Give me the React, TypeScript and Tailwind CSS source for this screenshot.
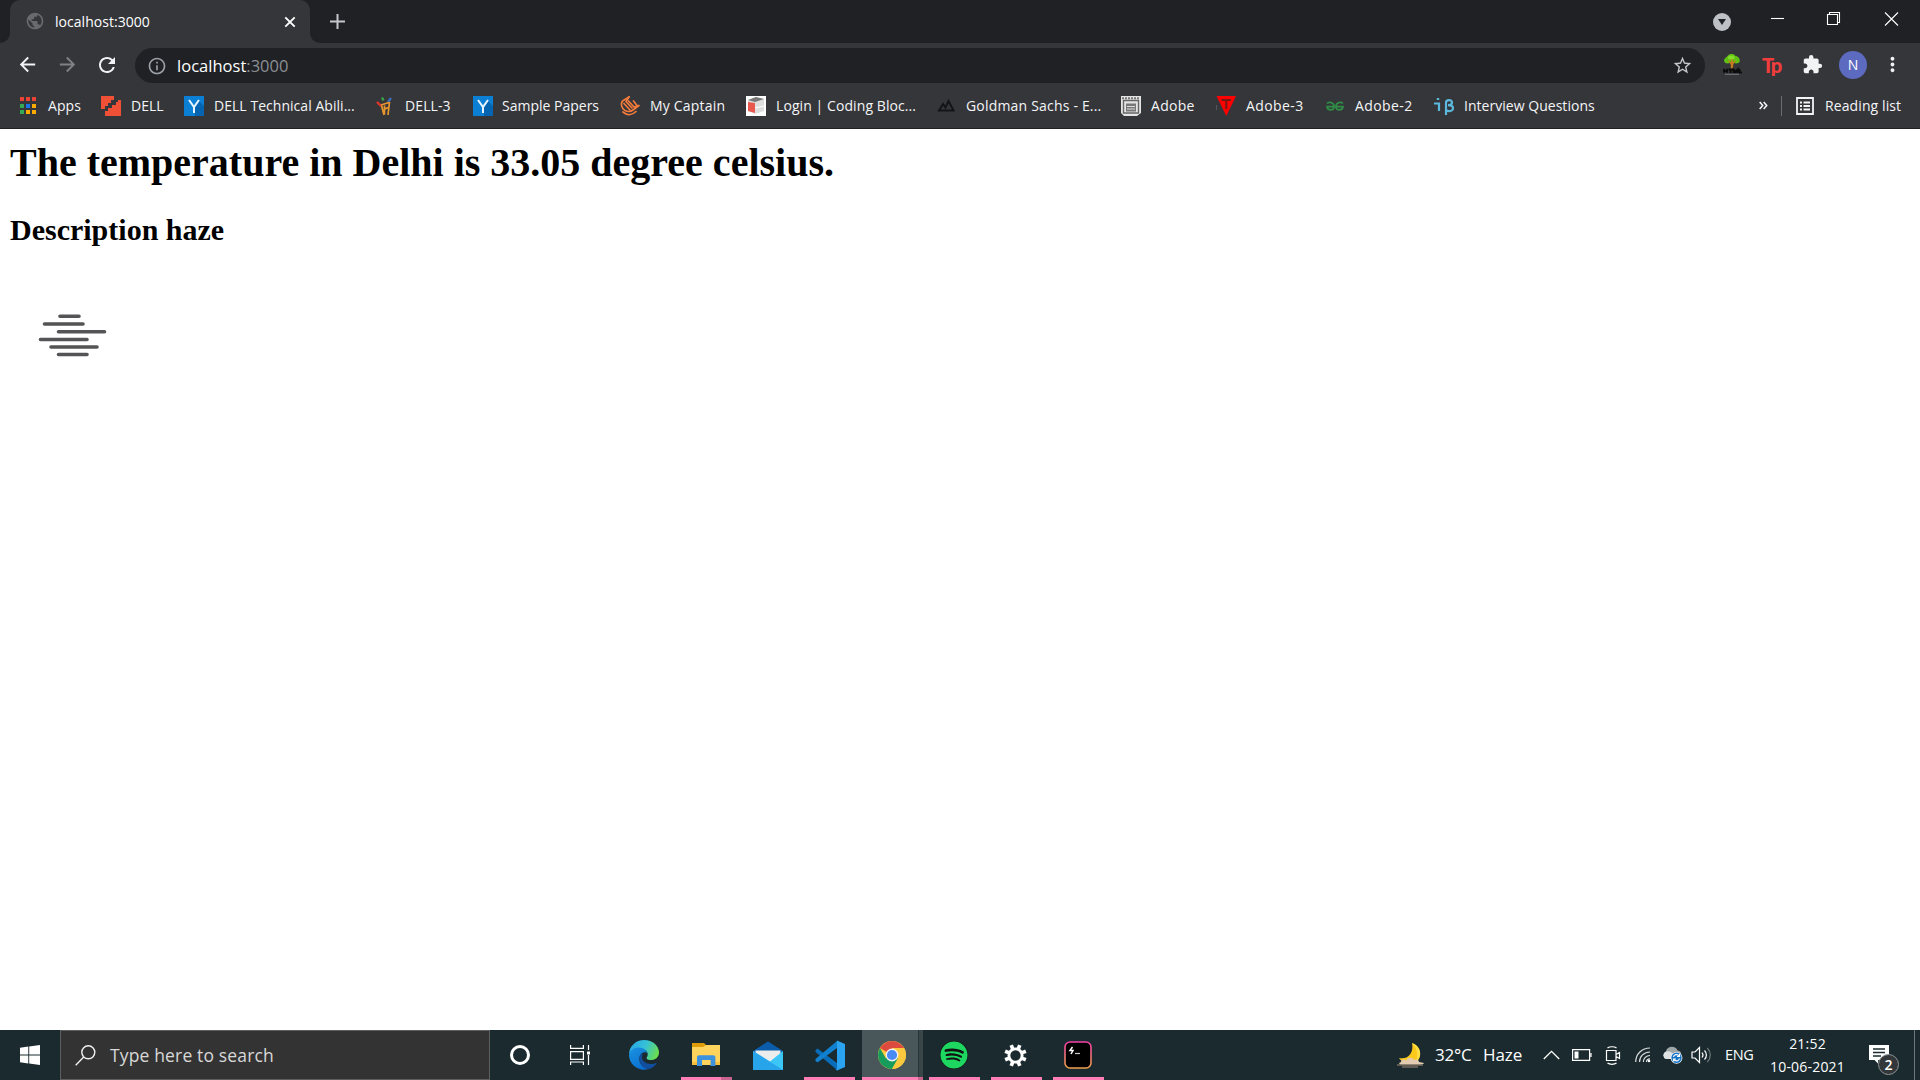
import type { ReactNode } from "react";
import {
  MdArrowBack,
  MdArrowForward,
  MdExtension,
  MdInfoOutline,
  MdMoreVert,
  MdPublic,
  MdRefresh,
  MdStarBorder,
} from "react-icons/md";
import { FaSpotify } from "react-icons/fa";

/* ---------- Bookmark icons (20 x 20) ---------- */

const AppsIcon = () => (
  <svg width="20" height="20" viewBox="0 0 20 20" shapeRendering="crispEdges">
    {[
      ["#ea4335", "#ea4335", "#ea4335"],
      ["#34a853", "#1a73e8", "#f9ab00"],
      ["#34a853", "#f9ab00", "#f9ab00"],
    ].map((row, r) =>
      row.map((c, i) => <rect key={`${r}${i}`} x={2 + i * 6} y={1 + r * 6.5} width="4" height="4" fill={c} />),
    )}
  </svg>
);

const DellIcon = () => (
  <svg width="20" height="20" viewBox="0 0 20 20" fill="#f05136">
    <path d="M0 0h13v4h-3v3H7v3H4v3H0z" />
    <path d="M20 4v16H4v-5h3v-3h4V9h4V6h2V4z" />
  </svg>
);

const YIcon = () => (
  <svg width="20" height="20" viewBox="0 0 20 20">
    <rect width="20" height="20" fill="#0b7fd4" />
    <path d="M15 5l5 5v10h-9V12z" fill="#0564b0" />
    <path d="M5 4l5 7 5-7M10 11v6" fill="none" stroke="#e9f4ff" strokeWidth="2" />
  </svg>
);

const FigureIcon = () => (
  <svg width="20" height="20" viewBox="0 0 20 20" fill="none" strokeWidth="1.700">
    <path d="M2 6l4 4" stroke="#e0352b" strokeWidth="2.400" />
    <path d="M7 1.500l1.500 3" stroke="#3da44b" strokeWidth="2.200" />
    <path d="M16 2l-3 4" stroke="#3a6fc4" strokeWidth="2.200" />
    <path d="M6 9l8-2.500M6.500 9.500L9 19M14.500 6L13 19M9.500 9.500v9M9 13.500l4-2" stroke="#e8962e" />
  </svg>
);

const HandIcon = () => (
  <svg width="20" height="20" viewBox="0 0 20 20" fill="none" stroke="#f47b3c" strokeWidth="1.700" strokeLinecap="round" strokeLinejoin="round">
    <path d="M9 1L2.500 5C.5 8 1.500 12.500 5 14.500c3 1.500 6 1 8-.5l6-4.500-5 1.500L8.500 5" />
    <path d="M9 1L6 5.500l6 6.500M4 7.500l6 6.500M13.500 5L17 9.500" />
    <path d="M3 16c4 3.500 9 3.500 13-.5" />
  </svg>
);

const BoxIcon = () => (
  <svg width="20" height="20" viewBox="0 0 20 20">
    <rect width="20" height="20" fill="#fff" />
    <path d="M2 4l8-3 8 2v12l-9 3-7-3z" fill="#dedede" />
    <path d="M2 4l8-3 8 2-9 3z" fill="#777" />
    <path d="M2 6l7 1v10l-7-2z" fill="#e8584f" />
    <path d="M9 12l9-2" stroke="#fff" />
  </svg>
);

const MountainIcon = () => (
  <svg width="20" height="20" viewBox="0 0 20 20" fill="none" stroke="#131416" strokeWidth="2">
    <path d="M3 14.500L7 8l2.500 3.500 3-6.500 5 9.500z" />
  </svg>
);

const WindowIcon = () => (
  <svg width="20" height="20" viewBox="0 0 20 20">
    <rect width="20" height="20" fill="#e4e4e4" />
    <path d="M1 2.200h18" stroke="#777" strokeWidth="2" strokeDasharray="2 1" />
    <path d="M2.500 4.500v12.500h15V4.500z" fill="none" stroke="#666" strokeWidth="1.400" />
    <path d="M5 7.500h10v8H5z" fill="#777" />
    <path d="M6 10.500h8M6 13h8" stroke="#ddd" />
    <path d="M0 17l3 3H0zM20 17l-4 3h4z" fill="#35363a" />
  </svg>
);

const TriangleIcon = () => (
  <svg width="20" height="20" viewBox="0 0 20 20">
    <path d="M0.500 0h19.500L10.300 20z" fill="#fe0000" />
    <path d="M5.500 4h9.500M10.300 4v9" stroke="#7a1712" strokeWidth="2" />
    <path d="M.5 9v5" stroke="#55565a" />
  </svg>
);

const GeeksIcon = () => (
  <svg width="20" height="20" viewBox="0 0 20 20" fill="none" stroke="#2f8d46" strokeWidth="1.700">
    <path d="M2 7.500C4 5.500 9 6 9 10.500c0 4.500-6.500 4.500-7 .2h16c-.5 4.300-7 4.300-7-.2C11 6 16 5.500 18 7.500" />
  </svg>
);

const InterviewIcon = () => (
  <svg width="20" height="20" viewBox="0 0 20 20" fill="none" stroke="#5cb8dc" strokeWidth="2.200">
    <path d="M0 7.500h5V15M2.800 3h2.400" />
    <path d="M12 19V6.500c0-3 6-3.500 6 0 0 2-1.500 2.700-4 2.700 3.500 0 5 .8 5 3 0 3.300-4.500 3.500-7 2" />
  </svg>
);

type Bookmark = { label: string; icon: ReactNode; box: string; text: string };

const bookmarks: Bookmark[] = [
  { label: "Apps", icon: <AppsIcon />, box: "w-[83px] gap-[10px]", text: "tracking-[0.1px]" },
  { label: "DELL", icon: <DellIcon />, box: "w-[83px] gap-[10px]", text: "tracking-normal" },
  { label: "DELL Technical Abili...", icon: <YIcon />, box: "w-[191px] gap-[10px]", text: "tracking-[0.04px]" },
  { label: "DELL-3", icon: <FigureIcon />, box: "w-[98px] gap-[10px]", text: "tracking-[0.1px]" },
  { label: "Sample Papers", icon: <YIcon />, box: "w-[147px] gap-[9px]", text: "tracking-normal" },
  { label: "My Captain", icon: <HandIcon />, box: "w-[126px] gap-[10px]", text: "tracking-[0.2px]" },
  { label: "Login | Coding Bloc...", icon: <BoxIcon />, box: "w-[190px] gap-[10px]", text: "tracking-[0.08px]" },
  { label: "Goldman Sachs - E...", icon: <MountainIcon />, box: "w-[185px] gap-[10px]", text: "tracking-[0.19px]" },
  { label: "Adobe", icon: <WindowIcon />, box: "w-[95px] gap-[10px]", text: "tracking-[0.3px]" },
  { label: "Adobe-3", icon: <TriangleIcon />, box: "w-[109px] gap-[10px]", text: "tracking-[0.4px]" },
  { label: "Adobe-2", icon: <GeeksIcon />, box: "w-[109px] gap-[10px]", text: "tracking-[0.4px]" },
  { label: "Interview Questions", icon: <InterviewIcon />, box: "w-[180px] gap-[10px]", text: "tracking-[0.03px]" },
];

/* ---------- Browser chrome ---------- */

function TabStrip() {
  return (
    <div className="flex h-[43px] bg-[#202124]">
      <div className="flex w-[10px] items-end bg-[#35363a]">
        <div className="h-full w-full rounded-br-[10px] bg-[#202124]" />
      </div>
      <div className="flex w-[300px] items-center rounded-t-[10px] bg-[#35363a] pr-[14px] pl-[15px]">
        <MdPublic className="size-[20px] -translate-y-px text-[#686a6e]" />
        <span className="ml-[10px] flex-1 text-[14px] leading-5 tracking-[0.04px] text-white">localhost:3000</span>
        <svg width="12" height="12" viewBox="0 0 12 12" stroke="#fff" strokeWidth="1.900">
          <path d="M1.300 1.300l9.400 9.400M10.700 1.300l-9.400 9.400" />
        </svg>
      </div>
      <div className="w-[10px] bg-[#35363a]">
        <div className="h-full w-full rounded-bl-[10px] bg-[#202124]" />
      </div>
      <div className="flex flex-1 items-center pl-[10px]">
        <svg width="15" height="15" viewBox="0 0 15 15" stroke="#c4c7cb" strokeWidth="2">
          <path d="M7.500 0v15M0 7.500h15" />
        </svg>
      </div>
      <div className="flex h-full items-start pr-[7px]">
        <svg className="mt-[12px] mr-[39px]" width="20" height="20" viewBox="0 0 20 20">
          <circle cx="10" cy="10" r="9" fill="#bdc1c6" />
          <path d="M6 7h8L10 13z" fill="#202124" />
        </svg>
        <svg className="mt-[11px]" width="142" height="16" viewBox="0 0 142 16" fill="none" stroke="#fff" strokeWidth="1.100">
          <path d="M0 7.500h13" />
          <path d="M56.500 3.500h10v10h-10zM58.500 3.500v-2h10v10h-2" />
          <path d="M114 1.500l13 13M127 1.500l-13 13" />
        </svg>
      </div>
    </div>
  );
}

function TreeIcon() {
  return (
    <svg width="20" height="21" viewBox="0 0 20 21">
      <path d="M10 5v10" stroke="#c87a22" strokeWidth="2.400" />
      <path d="M2 14.800v4M2 17h3M5 14.800v4M6.500 15.500h4M8.500 15.500v3.500M11.500 19v-3.500l2 2.500 2-2.500V19M17.500 14.800v3.600h2.500" stroke="#0b0b0b" strokeWidth="1.900" fill="none" />
      <path d="M6 1.500C8-.5 12-.5 13.500 2 17 2 19 7 17 8.500c-2 1.500-5 1-6-.5L10 6 9 8C7 10.500 2 9.500 2 6.500c0-2 2-3 2-3z" fill="#5fbf12" />
      <path d="M6 3c2-2 5-2 6.500 0C14 6 5 7 6 3z" fill="#84dc2b" />
      <path d="M6.500 6.500L10 11l3.500-4.500M10 5v9" stroke="#c87a22" strokeWidth="1.200" fill="none" />
      <path d="M3 20.300h14" stroke="#8a8a8a" strokeWidth=".8" />
    </svg>
  );
}

function Toolbar() {
  return (
    <div className="flex h-[45px] items-center bg-[#35363a] pb-[2px] pl-[16px]">
      <MdArrowBack className="size-[23px] text-[#f1f3f4]" />
      <MdArrowForward className="ml-[17px] size-[23px] text-[#7f8185]" />
      <MdRefresh className="ml-[16px] size-[24px] text-[#f1f3f4]" />
      <div className="mt-[2px] ml-[16px] flex h-[35px] w-[1570px] items-center rounded-full bg-[#202124] pr-[12px] pl-[12px]">
        <MdInfoOutline className="size-[20px] text-[#9aa0a6]" />
        <span className="ml-[10px] flex-1 text-[16.500px] leading-6 tracking-[0.02px] text-white">
          localhost<span className="text-[#8b8f94]">:3000</span>
        </span>
        <MdStarBorder className="size-[21px] text-[#c4c7cb]" />
      </div>
      <div className="ml-[17px]">
        <TreeIcon />
      </div>
      <span className="ml-[20px] w-[20px] font-['Lato'] text-[20px] leading-5 font-black tracking-[-1.500px] text-[#f23d3d]">Tp</span>
      <MdExtension className="ml-[20px] size-[21px] text-[#f1f3f4]" />
      <div className="ml-[16px] flex size-[28px] items-center justify-center rounded-full bg-[#5c6bc0] text-[14px] text-white">N</div>
      <MdMoreVert className="ml-[14px] size-[23px] text-[#f1f3f4]" />
    </div>
  );
}

function BookmarksBar() {
  return (
    <div className="flex h-[41px] border-b border-[#202124] bg-[#35363a] pb-[5px] pl-[18px] text-[14px] leading-5 text-[#f4f5f6]">
      {bookmarks.map((b) => (
        <div key={b.label} className={`flex shrink-0 items-center whitespace-nowrap ${b.box}`}>
          <span className="w-5 shrink-0">{b.icon}</span>
          <span className={b.text}>{b.label}</span>
        </div>
      ))}
      <div className="ml-auto flex items-center pr-[18px]">
        <svg width="9" height="9" viewBox="0 0 9 9" fill="none" stroke="#f1f3f4" strokeWidth="1.600">
          <path d="M.7 1l3 3.500-3 3.500M4.700 1l3 3.500-3 3.500" />
        </svg>
        <div className="ml-[13px] h-5 w-px bg-[#6b6c70]" />
        <svg className="ml-[14px]" width="18" height="18" viewBox="0 0 18 18" fill="none" stroke="#f1f3f4" strokeWidth="1.800">
          <path d="M1 1h16v16H1z" />
          <path d="M4 5.500h2M7.500 5.500h6.500M4 9h2M7.500 9h6.500M4 12.500h2M7.500 12.500h6.500" />
        </svg>
        <span className="ml-[11px] w-[77px] tracking-[0.1px] whitespace-nowrap">Reading list</span>
      </div>
    </div>
  );
}

/* ---------- Page ---------- */

function WeatherPage() {
  return (
    <main className="flex-1 bg-white px-[10px] pt-[11px] font-['Liberation_Serif',serif] text-black">
      <h1 className="text-[40px] leading-[46px] font-bold">The temperature in Delhi is 33.05 degree celsius.</h1>
      <h2 className="mt-[27px] text-[30px] leading-[34px] font-bold">Description haze</h2>
      <svg className="mt-[26px]" width="125" height="125" viewBox="10 273 125 125" stroke="#545456" strokeWidth="3.600" strokeLinecap="round">
        <path d="M60 316.300h19M44.500 324h38.500M58.500 331.800h46M40.500 339.500h46.500M51 347h46M58.500 354.500h28.500" />
      </svg>
    </main>
  );
}

/* ---------- Taskbar ---------- */

const EdgeIcon = () => (
  <svg width="30" height="30" viewBox="0 0 30 30">
    <defs>
      <linearGradient id="edgeTop" x1="0" y1="0.300" x2="1" y2="0.600">
        <stop offset="0" stopColor="#2aa7e8" />
        <stop offset=".5" stopColor="#35c1d8" />
        <stop offset="1" stopColor="#6be04a" />
      </linearGradient>
      <linearGradient id="edgeLeft" x1="0" y1="0" x2="0.600" y2="1">
        <stop offset="0" stopColor="#1b93e0" />
        <stop offset="1" stopColor="#0a6fd0" />
      </linearGradient>
    </defs>
    <path d="M0 15C0 6 7 0 15 0c9 0 15 6 15 12.500 0 5-4 7.500-8 7.500-4 0-5-1.500-4-3 1.500-2 1-6-3-7.500C9 7 2 9 0 15z" fill="url(#edgeTop)" />
    <path d="M0 15C1 10 5 7.500 9.500 7.500c5 0 8.500 3 8.500 6-1-2-5-2-7 2-2.500 6 2 13 9 13.500C10 32 0 25 0 15z" fill="url(#edgeLeft)" />
    <path d="M11.500 14c-3 7 1 15 9 15 3-1 6-3.500 7.500-6.500-7 3.500-15 .5-15-5.500 0-1 .2-2 .8-3z" fill="#114f9e" />
  </svg>
);

const ExplorerIcon = () => (
  <svg width="28" height="26" viewBox="0 0 28 26">
    <path d="M0 1h12l2 2-1 3H0z" fill="#e09b08" />
    <path d="M0 5h11l3-2h14v20H0z" fill="#ffd35c" />
    <path d="M0 20h28v3H0z" fill="#f6bf3b" />
    <path d="M5 24V15.500c0-1.500 1-2.200 2.200-2.200h14c1.300 0 2.200.7 2.200 2.200V24h-5v-6H10v6z" fill="#3c92dd" />
    <path d="M10 18h8.400v5H10z" fill="#ffd35c" />
  </svg>
);

const MailIcon = () => (
  <svg width="30" height="29" viewBox="0 0 30 29">
    <path d="M0 10L15 0.500 30 10v3H0z" fill="#0b5cab" />
    <path d="M2.500 9.500h25V13L17 22 2.500 12z" fill="#ededed" />
    <path d="M0 10l17 10.500L30 10v19H0z" fill="#3cc6f6" />
    <path d="M0 10l30 19H0z" fill="#28a5ea" />
  </svg>
);

const CodeIcon = () => (
  <svg width="30" height="31" viewBox="0 0 30 31">
    <path d="M22 8v15L2.500 8.500l-2 1.700v1.800L22 30z" fill="#0a6dba" />
    <path d="M22 8L2.500 22.500l-2-1.700V19L22 1z" fill="#1180cf" />
    <path d="M22 .5l8 3.500v23l-8 3.500-1.500-1L22 29z" fill="#2aa3f0" />
  </svg>
);

const ChromeIcon = () => (
  <svg className="ml-[3px]" width="28" height="28" viewBox="0 0 28 28">
    <circle cx="14" cy="14" r="14" fill="#fbc93d" />
    <path d="M14 14L1.900 7A14 14 0 0 1 26.100 7H14z" fill="#dd4b3e" />
    <path d="M1.900 7A14 14 0 0 0 14 28l6-10.500L14 14 7.900 17.500z" fill="#179c5b" />
    <path d="M14 28a14 14 0 0 0 12.100-21H14l6 10.500z" fill="#fbc93d" />
    <circle cx="14" cy="14" r="6.400" fill="#f3f3f3" />
    <circle cx="14" cy="14" r="5.100" fill="#4a8af4" />
  </svg>
);

const SettingsIcon = () => (
  <svg className="-ml-px" width="23" height="23" viewBox="0 0 24 24" fill="none" stroke="#fff">
    <circle cx="12" cy="12" r="6.900" strokeWidth="3" />
    {[22.5, 67.5, 112.5, 157.5, 202.5, 247.5, 292.5, 337.5].map((a) => (
      <path key={a} d="M12 .3v4" strokeWidth="3.800" transform={`rotate(${a} 12 12)`} />
    ))}
  </svg>
);

const HyperIcon = () => (
  <svg className="-ml-px" width="28" height="28" viewBox="0 0 28 28">
    <defs>
      <linearGradient id="hyperEdge" x1="0" y1="0" x2="0" y2="1">
        <stop offset="0" stopColor="#f43fa8" />
        <stop offset="1" stopColor="#f0a04a" />
      </linearGradient>
    </defs>
    <rect x="1" y="1" width="26" height="26" rx="5" fill="#000" stroke="url(#hyperEdge)" strokeWidth="1.600" />
    <path d="M8.500 6L6 9.500h3L7 13" fill="none" stroke="#fff" strokeWidth="1.500" />
    <path d="M11 12.500h5" stroke="#ccc" strokeWidth="1.200" />
  </svg>
);

type Task = { name: string; icon: ReactNode; box: string; bar: ReactNode };

const pinkBar = <div className="h-[3px] w-[51px] bg-[#ff7eb6]" />;

const tasks: Task[] = [
  { name: "edge", icon: <EdgeIcon />, box: "w-[62px]", bar: null },
  {
    name: "explorer",
    icon: <ExplorerIcon />,
    box: "w-[62px]",
    bar: (
      <div className="flex h-[3px] w-[51px]">
        <div className="w-[40px] bg-[#ff7eb6]" />
        <div className="flex-1 bg-[#c9638f]" />
      </div>
    ),
  },
  { name: "mail", icon: <MailIcon />, box: "w-[62px]", bar: null },
  { name: "code", icon: <CodeIcon />, box: "w-[63px] pr-[2px]", bar: pinkBar },
];

const trailingTasks: Task[] = [
  { name: "spotify", icon: <FaSpotify className="size-[28px] rounded-full bg-[#111] text-[#1ed760]" />, box: "w-[62px]", bar: pinkBar },
  { name: "settings", icon: <SettingsIcon />, box: "w-[62px]", bar: pinkBar },
  { name: "hyper", icon: <HyperIcon />, box: "w-[62px]", bar: pinkBar },
];

function TaskButton({ task }: { task: Task }) {
  return (
    <div className={`flex h-full flex-col items-center ${task.box}`}>
      <div className="flex h-[47px] items-center justify-center pt-[3px]">{task.icon}</div>
      {task.bar}
    </div>
  );
}

function Tray() {
  return (
    <div className="ml-auto flex h-full items-center text-white">
      <svg width="28" height="26" viewBox="0 0 28 26">
        <path d="M15 1c9 3 11 14 4 19-5 3-14 1-17-4 9 2 15-5 13-15z" fill="#fcc81c" />
        <path d="M15 1c9 3 11 14 4 19 2-6 2-13-4-19z" fill="#ffdf45" />
        <path d="M4 20c0-3 4-3 5-1 1-4 7-4 8-1 3-1 5 0 5 2l5 1c0 1-3 1.500-6 1.500H5c-3 0-4-1.500-1-2.500z" fill="#e2cbb0" />
        <path d="M0 23h26M5 25h16" stroke="#a58e78" strokeWidth="1.200" />
      </svg>
      <span className="ml-[10px] w-[48px] text-[17px] tracking-[-0.2px]">32°C</span>
      <span className="w-[60px] text-[17px] tracking-[-0.1px]">Haze</span>
      <svg width="17" height="10" viewBox="0 0 17 10" fill="none" stroke="#fff" strokeWidth="1.300">
        <path d="M.8 9l7.700-7.700L16.200 9" />
      </svg>
      <svg className="ml-[12px]" width="20" height="12" viewBox="0 0 20 12" fill="none" stroke="#fff" strokeWidth="1.200">
        <path d="M.6.6h17v10.800H.6zM19 4v4" />
        <path d="M2.500 2.500h4v7h-4z" fill="#fff" stroke="none" />
      </svg>
      <svg className="ml-[13px]" width="16" height="19" viewBox="0 0 16 19" fill="none" stroke="#fff" strokeWidth="1.200">
        <path d="M1.500 4.500h9.500v10H1.500zM11 8.500l3.500-2v6l-3.500-2M2.500 2c2-1.700 7-1.700 9 0M2.500 17c2 1.700 7 1.700 9 0" />
      </svg>
      <svg className="ml-[14px]" width="16" height="16" viewBox="0 0 16 16" fill="none" stroke="#d8dcdd" strokeWidth="1.200">
        <path d="M.7 15C.7 7 7 1 15 1M4.500 15C4.500 9.500 9 5 15 5M8.300 15c0-3.500 3-6.500 6.700-6.500M11.500 15c0-2 1.500-3.200 3.500-3.200" />
        <circle cx="14" cy="14" r="1.300" fill="#fff" stroke="none" />
      </svg>
      <svg className="ml-[11px]" width="21" height="18" viewBox="0 0 21 18">
        <path d="M4 13a4 4 0 0 1 0-7.500C5-.5 14-.5 15.500 4.500 18 4.500 20 7 19 10l-5 3z" fill="#9fa6a8" />
        <path d="M4 13a4 4 0 0 1 0-7.500c3-.5 5 .5 6.500 2L15 13z" fill="#dfe2e3" />
        <circle cx="14.500" cy="11.800" r="5.900" fill="#fff" />
        <circle cx="14.500" cy="11.800" r="5.200" fill="#1672c4" />
        <path d="M11.500 11c.5-2.500 4-3.300 5.500-1M17.500 8v2.500H15M17.500 12.500c-.5 2.500-4 3.300-5.500 1M11.500 15.500V13H14" fill="none" stroke="#fff" strokeWidth="1.200" />
      </svg>
      <svg className="ml-[8px]" width="21" height="18" viewBox="0 0 21 18" fill="none" stroke="#fff" strokeWidth="1.200">
        <path d="M1 6h3l4.500-4.500v15L4 12H1z" />
        <path d="M11 6.500c1.200 1.500 1.200 3.500 0 5M13.500 4.500c2.500 2.500 2.500 6.500 0 9" />
        <path d="M16.300 2c4 4 4 10 0 14" stroke="#6f797b" />
      </svg>
      <span className="ml-[13px] w-[41px] text-[14.500px] tracking-[-0.3px]">ENG</span>
      <div className="flex w-[83px] flex-col items-center text-[14px] leading-[23px] tracking-[0.2px] whitespace-nowrap">
        <span>21:52</span>
        <span>10-06-2021</span>
      </div>
      <div className="relative ml-[20px] h-[30px] w-[30px]">
        <svg width="21" height="24" viewBox="0 0 21 24">
          <path d="M0 5h20v15H9v3.500L5.500 20H0z" fill="#fff" />
          <path d="M4 9h12M4 12.500h12M4 16h8" stroke="#1c2b2f" strokeWidth="1.300" />
        </svg>
        <span className="absolute top-[14px] left-[9px] flex size-[21px] items-center justify-center rounded-full border border-[#8d9496] bg-[#333739] text-[14px] font-semibold">
          2
        </span>
      </div>
      <div className="ml-[15px] h-full w-px bg-[#6c7779]" />
      <div className="w-[5px]" />
    </div>
  );
}

function Taskbar() {
  return (
    <footer className="flex h-[50px] bg-[#1a2a2e]">
      <div className="flex w-[60px] items-center justify-center">
        <svg width="20" height="20" viewBox="0 0 20 20" fill="#fff">
          <path d="M0 2.800L8.300 1.600V9.500H0zM9.200 1.500L20 0v9.500H9.200zM0 10.400h8.300v8L0 17.200zM9.200 10.400H20V20L9.200 18.500z" />
        </svg>
      </div>
      <div className="flex h-[50px] w-[430px] items-center border border-[#5b5f60] bg-[#333333] pl-[14px]">
        <svg width="21" height="21" viewBox="0 0 21 21" fill="none" stroke="#f0f0f0" strokeWidth="1.400">
          <circle cx="13.300" cy="7.300" r="6.500" />
          <path d="M8.700 12L.7 20.200" />
        </svg>
        <span className="ml-[14px] text-[17.500px] tracking-[0.15px] text-[#d8d8d8]">Type here to search</span>
      </div>
      <div className="flex w-[60px] items-center justify-center">
        <div className="size-[20px] rounded-full border-[3px] border-white" />
      </div>
      <div className="flex w-[63px] items-center justify-center pr-[3px]">
        <svg width="20" height="20" viewBox="0 0 20 20" fill="none" stroke="#fff" strokeWidth="1.200">
          <path d="M.6 0v3.400h12.800V0M.6 6.600h12.800v7.800H.6zM.6 20v-3h12.800v3M18.500 0v5M18.500 10v10" />
          <path d="M17 6.500h3v3h-3z" fill="#fff" stroke="none" />
        </svg>
      </div>
      {tasks.map((t) => (
        <TaskButton key={t.name} task={t} />
      ))}
      <div className="flex h-full w-[61px] flex-col">
        <div className="flex h-[47px]">
          <div className="flex w-[56px] items-center justify-center bg-[#49575b] pt-[3px]">
            <ChromeIcon />
          </div>
          <div className="w-px bg-[#283336]" />
          <div className="flex-1 bg-[#394547]" />
        </div>
        <div className="flex h-[3px]">
          <div className="w-[56px] bg-[#ff7eb6]" />
          <div className="flex-1 bg-[#c9638f]" />
        </div>
      </div>
      {trailingTasks.map((t) => (
        <TaskButton key={t.name} task={t} />
      ))}
      <Tray />
    </footer>
  );
}

export default function App() {
  return (
    <div className="flex h-[1080px] w-[1920px] flex-col overflow-hidden bg-white font-['Open_Sans','Noto_Sans',sans-serif]">
      <TabStrip />
      <Toolbar />
      <BookmarksBar />
      <WeatherPage />
      <Taskbar />
    </div>
  );
}
